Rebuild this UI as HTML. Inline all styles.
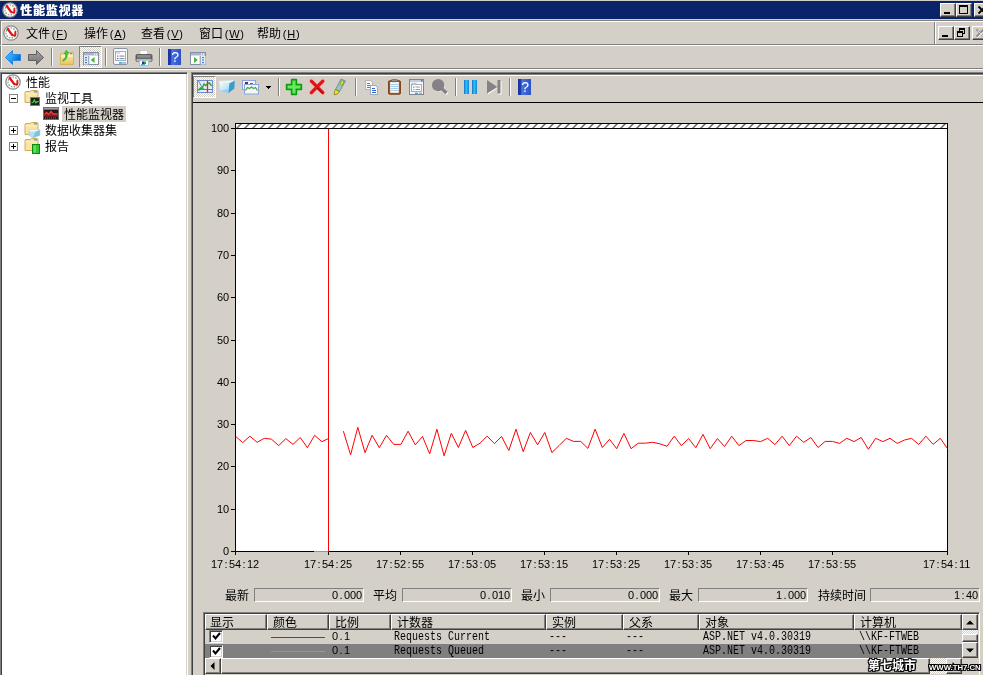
<!DOCTYPE html>
<html lang="zh-CN">
<head>
<meta charset="utf-8">
<title>性能监视器</title>
<style>
*{box-sizing:border-box;margin:0;padding:0}
html,body{width:983px;height:675px;overflow:hidden;background:#d4d0c8}
body{position:relative;font-family:"Liberation Sans","Noto Sans CJK SC",sans-serif;font-size:12px;color:#000;line-height:1}
#root{position:absolute;left:0;top:0;width:983px;height:675px;will-change:transform}
.a{position:absolute}
.t{position:absolute;white-space:nowrap;line-height:14px;height:14px;font-size:12px}
.t{margin-top:1px}
.ax{position:absolute;white-space:nowrap;line-height:14px;height:14px;font-family:"Liberation Mono",monospace;font-size:12px;transform:scaleX(.8333);transform-origin:0 50%;margin-top:2px}
.ax.r{transform-origin:100% 50%;text-align:right}
.nm{position:absolute;white-space:nowrap;line-height:14px;height:14px;font-family:"Liberation Sans",sans-serif;font-size:11px;letter-spacing:-0.12px;margin-top:0px}
.nm.r{text-align:right}
.nm i{display:inline-block;width:6px;text-align:center;font-style:normal;letter-spacing:0}
.btn{position:absolute;background:#d4d0c8;border:1px solid;border-color:#fff #404040 #404040 #fff;box-shadow:inset -1px -1px 0 #808080}
.sunk{position:absolute;border:1px solid;border-color:#808080 #fff #fff #808080}
.pressed{position:absolute;border:1px solid;border-color:#808080 #fff #fff #808080;background-color:#fff;background-image:linear-gradient(45deg,#d4d0c8 25%,transparent 25%,transparent 75%,#d4d0c8 75%),linear-gradient(45deg,#d4d0c8 25%,transparent 25%,transparent 75%,#d4d0c8 75%);background-size:2px 2px;background-position:0 0,1px 1px}
.dither{background-color:#fff;background-image:linear-gradient(45deg,#d4d0c8 25%,transparent 25%,transparent 75%,#d4d0c8 75%),linear-gradient(45deg,#d4d0c8 25%,transparent 25%,transparent 75%,#d4d0c8 75%);background-size:2px 2px;background-position:0 0,1px 1px}
.sep{position:absolute;width:2px;border-left:1px solid #808080;border-right:1px solid #fff}
.hd{position:absolute;top:614px;height:16px;background:#d4d0c8;border:1px solid;border-color:#fff #404040 #404040 #fff;box-shadow:inset -1px -1px 0 #808080}
.hd span{position:absolute;left:5px;top:1px;line-height:14px;white-space:nowrap}
.wm{position:absolute;white-space:nowrap;color:#fff;font-weight:bold;text-shadow:-1px -1px 0 #000,1px -1px 0 #000,-1px 1px 0 #000,1px 1px 0 #000,0 -1px 0 #000,0 1px 0 #000,-1px 0 0 #000,1px 0 0 #000}
u{text-decoration:underline}
</style>
</head>
<body>
<div id="root">
<div class="a" style="left:0;top:1px;width:983px;height:18px;background:#0a246a"></div>
<div class="t" style="left:20px;top:3px;color:#fff;font-weight:bold;letter-spacing:0.8px;text-shadow:.4px 0 0 #fff">性能监视器</div>
<div class="btn" style="left:940px;top:3px;width:16px;height:14px"><div class="a" style="left:3px;top:8px;width:6px;height:2px;background:#000"></div></div>
<div class="btn" style="left:956px;top:3px;width:16px;height:14px"><div class="a" style="left:2px;top:1px;width:9px;height:9px;border:1px solid #000;border-top-width:2px"></div></div>
<div class="btn" style="left:974px;top:3px;width:16px;height:14px"><svg class="a" style="left:2px;top:1px" width="10" height="10"><path d="M1.5 1.5 L8.5 8.5 M8.5 1.5 L1.5 8.5" stroke="#000" stroke-width="1.8"/></svg></div>
<div class="a" style="left:0;top:20px;width:990px;height:25px;border-left:1px solid #808080;border-top:1px solid #808080"></div>
<div class="a" style="left:1px;top:21px;width:990px;height:24px;border-left:1px solid #fff;border-top:1px solid #fff"></div>
<div class="a" style="left:2px;top:44px;width:990px;height:1px;background:#808080"></div>
<div class="a" style="left:1px;top:45px;width:990px;height:1px;background:#fff"></div>
<div class="a" style="left:2px;top:68px;width:990px;height:1px;background:#808080"></div>
<div class="a" style="left:0px;top:69px;width:990px;height:1px;background:#fff"></div>
<div class="a" style="left:0;top:46px;width:1px;height:23px;background:#808080"></div>
<div class="a" style="left:1px;top:46px;width:1px;height:22px;background:#fff"></div>
<div class="sep" style="left:934px;top:22px;height:22px"></div>
<div class="btn" style="left:938px;top:26px;width:16px;height:14px"><div class="a" style="left:3px;top:8px;width:6px;height:2px;background:#000"></div></div>
<div class="btn" style="left:954px;top:26px;width:16px;height:14px"><div class="a" style="left:4px;top:1px;width:6px;height:6px;border:1px solid #000;border-top-width:2px"></div><div class="a" style="left:2px;top:4px;width:6px;height:6px;border:1px solid #000;border-top-width:2px;background:#d4d0c8"></div></div>
<div class="btn" style="left:972px;top:26px;width:16px;height:14px"><svg class="a" style="left:2px;top:1px" width="10" height="10"><path d="M1.5 1.5 L8.5 8.5 M8.5 1.5 L1.5 8.5" stroke="#808080" stroke-width="1.6"/><path d="M2.5 2.5 L9.5 9.5 M9.5 2.5 L2.5 9.5" stroke="#fff" stroke-width="1" opacity=".8"/></svg></div>
<svg class="a" style="left:2px;top:2px" width="16" height="16" viewBox="0 0 16 16"><circle cx="8" cy="8" r="7.2" fill="#fff" stroke="#8a8a90" stroke-width="1.3"/><circle cx="8" cy="8" r="5" fill="none" stroke="#6f9a80" stroke-width="1.2" stroke-dasharray="1.6 1.2"/><path d="M4.2 3.3 L9.6 10.6" stroke="#e81010" stroke-width="2.3"/><path d="M9 10.4 L12.3 10.4 L12.3 6.2" stroke="#e81010" stroke-width="1.8" fill="none"/></svg>
<svg class="a" style="left:3px;top:25px" width="16" height="16" viewBox="0 0 16 16"><circle cx="8" cy="8" r="7.2" fill="#fff" stroke="#8a8a90" stroke-width="1.3"/><circle cx="8" cy="8" r="5" fill="none" stroke="#6f9a80" stroke-width="1.2" stroke-dasharray="1.6 1.2"/><path d="M4.2 3.3 L9.6 10.6" stroke="#e81010" stroke-width="2.3"/><path d="M9 10.4 L12.3 10.4 L12.3 6.2" stroke="#e81010" stroke-width="1.8" fill="none"/></svg>
<div class="t" style="left:26px;top:26px">文件</div>
<div class="nm" style="left:51.7px;top:27px;letter-spacing:.8px">(<u>F</u>)</div>
<div class="t" style="left:84px;top:26px">操作</div>
<div class="nm" style="left:109.7px;top:27px;letter-spacing:.8px">(<u>A</u>)</div>
<div class="t" style="left:141px;top:26px">查看</div>
<div class="nm" style="left:166.7px;top:27px;letter-spacing:.8px">(<u>V</u>)</div>
<div class="t" style="left:199px;top:26px">窗口</div>
<div class="nm" style="left:224.7px;top:27px;letter-spacing:.8px">(<u>W</u>)</div>
<div class="t" style="left:257px;top:26px">帮助</div>
<div class="nm" style="left:282.7px;top:27px;letter-spacing:.8px">(<u>H</u>)</div>
<svg class="a" style="left:4px;top:49px" width="18" height="17" viewBox="0 0 18 17"><defs><linearGradient id="gb" x1="0" y1="0" x2="1" y2=".5"><stop offset="0" stop-color="#48c0ff"/><stop offset=".55" stop-color="#20a0f8"/><stop offset="1" stop-color="#0864cc"/></linearGradient><linearGradient id="gg" x1="0" y1="0" x2="0" y2="1"><stop offset="0" stop-color="#a8a8a8"/><stop offset="1" stop-color="#707070"/></linearGradient></defs><path d="M1.5 8.5 L8.5 1.5 L8.5 5.5 L16.5 5.5 L16.5 11.5 L8.5 11.5 L8.5 15.5 Z" fill="url(#gb)" stroke="#2888e0" stroke-width="1"/></svg>
<svg class="a" style="left:27px;top:49px" width="18" height="17" viewBox="0 0 18 17"><path d="M16.5 8.5 L9.5 1.5 L9.5 5.5 L1.5 5.5 L1.5 11.5 L9.5 11.5 L9.5 15.5 Z" fill="url(#gg)" stroke="#606060" stroke-width="1"/></svg>
<div class="sep" style="left:51px;top:48px;height:18px"></div>
<svg class="a" style="left:59px;top:49px" width="16" height="17" viewBox="0 0 16 17"><defs><linearGradient id="gf" x1="0" y1="0" x2="0" y2="1"><stop offset="0" stop-color="#fcf0c0"/><stop offset="1" stop-color="#ecc458"/></linearGradient></defs><path d="M1.5 4.8 L9 4.8 L10 3.2 L14.5 3.2 L14.5 15.5 L1.5 15.5 Z" fill="url(#gf)" stroke="#d8b050" stroke-width=".9"/><path d="M2 7.2 H14" stroke="#fff8dc" stroke-width="1"/><rect x="10.8" y="3.8" width="2.6" height="1.3" fill="#4c8ce4"/><path d="M3.6 11.2 C6.2 10.2 7 7.5 6.6 4.6 L5 5 L7.2 1.2 L10 4 L8.4 4.3 C8.8 8 7 11.4 4 12.2 Z" fill="#44c834" stroke="#2ca020" stroke-width=".5"/></svg>
<div class="pressed" style="left:79px;top:46px;width:23px;height:22px"></div>
<svg class="a" style="left:83px;top:52px" width="16" height="13" viewBox="0 0 16 13"><rect x="0.5" y="0.5" width="15" height="12" fill="#fff" stroke="#8090a8"/><rect x="1" y="1" width="14" height="2.5" fill="#a8b4cc"/><rect x="11" y="1.5" width="1.2" height="1.2" fill="#fff"/><rect x="13" y="1.5" width="1.2" height="1.2" fill="#fff"/><rect x="1" y="4" width="4.5" height="8.5" fill="#e8ecf4"/><path d="M5.8 4 V12.5" stroke="#8090a8" stroke-width="1"/><rect x="2" y="5" width="2" height="1.2" fill="#4a7ad0"/><rect x="2" y="7.5" width="2" height="1.2" fill="#4a7ad0"/><rect x="2" y="10" width="2" height="1.2" fill="#4a7ad0"/><path d="M11.5 5 L11.5 11 L7.8 8 Z" fill="#3cb830"/></svg>
<div class="sep" style="left:105px;top:48px;height:18px"></div>
<svg class="a" style="left:113px;top:48px" width="16" height="17" viewBox="0 0 16 17"><rect x="0.5" y="0.5" width="14" height="16" rx="1.5" fill="#f4f6fa" stroke="#8a94a4"/><rect x="2.5" y="3.5" width="10" height="9" fill="#fff" stroke="#a8b0c0"/><rect x="3" y="4" width="4" height="2" fill="#d8dce8"/><rect x="4" y="7.5" width="1.4" height="1.2" fill="#3a80e0"/><rect x="6.5" y="7.5" width="5" height="1.2" fill="#9098a8"/><rect x="4" y="10" width="1.4" height="1.2" fill="#3a80e0"/><rect x="6.5" y="10" width="5" height="1.2" fill="#9098a8"/><rect x="6" y="14" width="3.5" height="1.8" fill="#30b8f0"/><rect x="10" y="14" width="3" height="1.8" fill="#b0b8c4"/></svg>
<svg class="a" style="left:135px;top:50px" width="18" height="16" viewBox="0 0 18 16"><rect x="5" y="0.5" width="7.5" height="5" fill="#fff" stroke="#c0c4cc" stroke-width=".8"/><rect x="1" y="4.5" width="16" height="7" rx="1.2" fill="#6c6c6c" stroke="#484848" stroke-width=".8"/><rect x="2.5" y="5" width="13" height="2.5" fill="#8c8c8c"/><rect x="1.5" y="9" width="15" height="2.5" fill="#b8b8b8"/><rect x="4.5" y="10.5" width="9" height="5" fill="#fff" stroke="#a8b8d0" stroke-width=".8"/><rect x="7" y="11.5" width="2" height="2.5" fill="#1a3a9a"/><rect x="9" y="11.5" width="2" height="2.5" fill="#28a028"/><rect x="6" y="14" width="4" height="1.2" fill="#30b0f0"/></svg>
<div class="sep" style="left:159px;top:48px;height:18px"></div>
<svg class="a" style="left:168px;top:49px" width="13" height="16" viewBox="0 0 13 16"><defs><linearGradient id="gh168" x1="0" y1="0" x2="1" y2="0"><stop offset="0" stop-color="#1c3cb0"/><stop offset=".35" stop-color="#4870e0"/><stop offset="1" stop-color="#2a50c8"/></linearGradient></defs><rect x="0" y="0" width="13" height="16" fill="url(#gh168)"/><rect x="0" y="0" width="3" height="16" fill="#182ea0" opacity=".7"/><text x="7.2" y="13" font-family="Liberation Sans,sans-serif" font-size="14" fill="#fff" text-anchor="middle">?</text></svg>
<svg class="a" style="left:190px;top:52px" width="16" height="13" viewBox="0 0 16 13"><rect x="0.5" y="0.5" width="15" height="12" fill="#fff" stroke="#8090a8"/><rect x="1" y="1" width="14" height="2.5" fill="#a8b4cc"/><rect x="11" y="1.5" width="1.2" height="1.2" fill="#fff"/><rect x="13" y="1.5" width="1.2" height="1.2" fill="#fff"/><rect x="10.5" y="4" width="5" height="8.5" fill="#e8ecf4"/><path d="M10.2 4 V12.5" stroke="#8090a8" stroke-width="1"/><rect x="12" y="5" width="2" height="1.2" fill="#4a7ad0"/><rect x="12" y="7.5" width="2" height="1.2" fill="#4a7ad0"/><rect x="12" y="10" width="2" height="1.2" fill="#4a7ad0"/><path d="M4 5 L4 11 L7.8 8 Z" fill="#3cb830"/></svg>
<div class="a" style="left:0;top:72px;width:188px;height:620px;background:#fff;border:1px solid;border-color:#808080 #fff #fff #808080;box-shadow:inset 1px 1px 0 #404040,inset -1px -1px 0 #d4d0c8"></div>
<svg class="a" style="left:5px;top:74px" width="16" height="16" viewBox="0 0 16 16"><circle cx="8" cy="8" r="7.2" fill="#fff" stroke="#8a8a90" stroke-width="1.3"/><circle cx="8" cy="8" r="5" fill="none" stroke="#6f9a80" stroke-width="1.2" stroke-dasharray="1.6 1.2"/><path d="M4.2 3.3 L9.6 10.6" stroke="#e81010" stroke-width="2.3"/><path d="M9 10.4 L12.3 10.4 L12.3 6.2" stroke="#e81010" stroke-width="1.8" fill="none"/></svg>
<div class="t" style="left:26px;top:75px">性能</div>
<svg class="a" style="left:9px;top:94px" width="9" height="9"><rect x=".5" y=".5" width="8" height="8" fill="#fff" stroke="#808080"/><path d="M2 4.5 H7" stroke="#000"/></svg>
<svg class="a" style="left:24px;top:90px" width="17" height="16" viewBox="0 0 17 16"><path d="M1 2.5 Q1 1.5 2 1.5 L6 1.5 L7.5 0.5 L13 0.5 Q14 0.5 14 1.5 L14 12.5 L1 12.5 Z" fill="#f8e4a4" stroke="#d0a448" stroke-width=".9"/><rect x="10" y="1.2" width="3" height="1.3" fill="#5a94e4"/><path d="M1.5 4 H13.5" stroke="#fff0c0" stroke-width="1"/><rect x="6.5" y="7.5" width="9" height="8" fill="#1c241c" stroke="#788078" stroke-width="1"/><path d="M7.5 12.8 L9 12.5 L10.3 10 L11.8 12.8 L13 11.6 L14.5 11.6" stroke="#40e040" stroke-width="1.1" fill="none"/></svg>
<div class="t" style="left:45px;top:91px">监视工具</div>
<svg class="a" style="left:43px;top:107px" width="16" height="13" viewBox="0 0 16 13"><rect x=".5" y=".5" width="15" height="12" fill="#281818" stroke="#707070"/><rect x="1" y="1" width="14" height="1.6" fill="#a0a0a8"/><path d="M1.5 7.5 L3.5 5.5 L5.5 7.5 L8 4.5 L10 7 L14.5 7" stroke="#ff4040" stroke-width="1.3" fill="none"/><path d="M1 7.8 L3.5 6 L5.5 8 L8 5 L10 7.4 L15 7.4 L15 9.5 L1 9.5 Z" fill="#c02020" opacity=".7"/><path d="M2 11 H14" stroke="#787878" stroke-width="1" stroke-dasharray="1 1"/></svg>
<div class="a" style="left:62px;top:106px;width:64px;height:16px;background:#d4d0c8"></div>
<div class="t" style="left:64px;top:107px">性能监视器</div>
<svg class="a" style="left:9px;top:126px" width="9" height="9"><rect x=".5" y=".5" width="8" height="8" fill="#fff" stroke="#808080"/><path d="M2 4.5 H7" stroke="#000"/><path d="M4.5 2 V7" stroke="#000"/></svg>
<svg class="a" style="left:24px;top:122px" width="17" height="16" viewBox="0 0 17 16"><path d="M1 2.5 Q1 1.5 2 1.5 L6 1.5 L7.5 0.5 L13 0.5 Q14 0.5 14 1.5 L14 12.5 L1 12.5 Z" fill="#f8e4a4" stroke="#d0a448" stroke-width=".9"/><rect x="10" y="1.2" width="3" height="1.3" fill="#5a94e4"/><path d="M1.5 4 H13.5" stroke="#fff0c0" stroke-width="1"/><path d="M5 8 L15.5 7.4 L16 8.5 L15.5 13.5 L9 15.8 L5 13.5 Z" fill="#b4e0f4" stroke="#88c4e0" stroke-width=".5"/><path d="M11.5 9.5 L16 8.5 L15.5 13.5 L9 15.8 Z" fill="#6cb8dc" opacity=".75"/><path d="M5 8 L15.5 7.4 L11.5 9.5 L6 9.6 Z" fill="#f0faff"/></svg>
<div class="t" style="left:45px;top:123px">数据收集器集</div>
<svg class="a" style="left:9px;top:142px" width="9" height="9"><rect x=".5" y=".5" width="8" height="8" fill="#fff" stroke="#808080"/><path d="M2 4.5 H7" stroke="#000"/><path d="M4.5 2 V7" stroke="#000"/></svg>
<svg class="a" style="left:24px;top:138px" width="17" height="16" viewBox="0 0 17 16"><path d="M1 2.5 Q1 1.5 2 1.5 L6 1.5 L7.5 0.5 L13 0.5 Q14 0.5 14 1.5 L14 12.5 L1 12.5 Z" fill="#f8e4a4" stroke="#d0a448" stroke-width=".9"/><rect x="10" y="1.2" width="3" height="1.3" fill="#5a94e4"/><path d="M1.5 4 H13.5" stroke="#fff0c0" stroke-width="1"/><rect x="8.5" y="6.5" width="7" height="9" fill="#30c830" stroke="#108810" stroke-width="1"/><rect x="9.5" y="7.5" width="2.5" height="7" fill="#78e878" opacity=".7"/></svg>
<div class="t" style="left:45px;top:139px">报告</div>
<div class="a" style="left:191px;top:72px;width:800px;height:620px;border-left:1px solid #808080;border-top:1px solid #808080"></div>
<div class="a" style="left:192px;top:73px;width:800px;height:620px;border-left:1px solid #404040;border-top:1px solid #404040"></div>
<div class="a" style="left:193px;top:74px;width:800px;height:1px;background:#808080"></div>
<div class="a" style="left:193px;top:75px;width:800px;height:1px;background:#fff"></div>
<div class="a" style="left:193px;top:102px;width:800px;height:1px;background:#000"></div>
<div class="pressed" style="left:193px;top:76px;width:23px;height:22px"></div>
<svg class="a" style="left:197px;top:80px" width="16" height="13" viewBox="0 0 16 13"><rect x=".5" y=".5" width="15" height="12" fill="#e4ecfa" stroke="#6f8cd0" stroke-width="1"/><path d="M1 9.5 H15" stroke="#5878c8" stroke-width="1"/><path d="M1.5 1 C4 5 5 9 8 9.5" stroke="#5878c8" stroke-width="1" fill="none"/><path d="M1.5 10.5 L3.5 8 L5 8.5 L7 4 L8.5 5.5 L11 3.5 L12.5 3 L14.5 6" stroke="#2cae2c" stroke-width="1.5" fill="none"/><path d="M10.5 0.5 V12.5" stroke="#e82810" stroke-width="1.3"/></svg>
<svg class="a" style="left:219px;top:80px" width="17" height="14" viewBox="0 0 17 14"><defs><linearGradient id="gc" x1="0" y1="0" x2="1" y2="1"><stop offset="0" stop-color="#ffffff"/><stop offset=".6" stop-color="#b8e0f4"/><stop offset="1" stop-color="#78c0e4"/></linearGradient></defs><path d="M0.3 1 L15.8 0.5 L15.3 8.5 L9.3 13.3 L0.8 10.5 Z" fill="url(#gc)"/><path d="M15.8 0.5 L15.3 8.5 L9.3 13.3 L10.5 3 Z" fill="#3a9ccc"/><path d="M0.3 1 L15.8 0.5 L10.5 3 L2 2.6 Z" fill="#e8f6fc"/><path d="M0.8 10.5 L9.3 13.3 L10 9 Z" fill="#8cccea" opacity=".7"/></svg>
<svg class="a" style="left:242px;top:80px" width="17" height="15" viewBox="0 0 17 15"><rect x=".5" y=".5" width="13" height="9" fill="#f0f4fc" stroke="#8ca4dc"/><rect x="3" y="2" width="3" height="2" fill="#a01038"/><rect x="8" y="3" width="3" height="1.2" fill="#3868e0"/><rect x="2.5" y="4.5" width="14" height="9.5" fill="#f4f6fc" stroke="#8ca4dc"/><path d="M3.5 10.5 L5.5 7.5 L7.5 8.5 L9.5 7 L11.5 8.5 L13.5 7.5 L15.5 10.5" stroke="#44aa3c" stroke-width="1.3" fill="none"/></svg>
<svg class="a" style="left:266px;top:86px" width="5" height="3" shape-rendering="crispEdges"><path d="M0 0 H5 V1 H0 Z M1 1 H4 V2 H1 Z M2 2 H3 V3 H2 Z" fill="#000"/></svg>
<div class="sep" style="left:278px;top:78px;height:18px"></div>
<svg class="a" style="left:285px;top:78px" width="18" height="18" viewBox="0 0 18 18"><path d="M6.5 1.5 H11.5 V6.5 H16.5 V11.5 H11.5 V16.5 H6.5 V11.5 H1.5 V6.5 H6.5 Z" fill="#34d02c" stroke="#0c9a10" stroke-width="1.4" stroke-linejoin="round"/><path d="M7.8 3 H10.2 V7.8 H15 V10.2 H10.2 V15 H7.8 V10.2 H3 V7.8 H7.8 Z" fill="#7cf070" opacity=".75"/></svg>
<svg class="a" style="left:308px;top:78px" width="18" height="18" viewBox="0 0 18 18"><path d="M3.2 3 L14.8 14.6 M14.8 3 L3.2 14.6" stroke="#f8b0a8" stroke-width="4.6" stroke-linecap="round"/><path d="M3.4 3.2 L14.8 14.6 M14.8 3.2 L3.4 14.6" stroke="#e01418" stroke-width="3.2" stroke-linecap="round"/><path d="M9.5 10.5 L14.5 15" stroke="#a00808" stroke-width="1.6" stroke-linecap="round" opacity=".7"/></svg>
<svg class="a" style="left:333px;top:78px" width="14" height="18" viewBox="0 0 14 18"><path d="M8 1 L12.5 3 L6.5 13.5 L2.5 11.5 Z" fill="#94c4cc" stroke="#5c8890" stroke-width=".8"/><path d="M8.6 2.5 L11 3.6 L8.8 7.5 L7 6.5 Z" fill="#ece41c" stroke="#8c8410" stroke-width=".6"/><path d="M2.5 11.5 L6.5 13.5 L4.5 16 L1.2 16.8 L1.5 13.5 Z" fill="#ece41c" stroke="#807810" stroke-width=".8"/></svg>
<div class="sep" style="left:355px;top:78px;height:18px"></div>
<svg class="a" style="left:365px;top:80px" width="14" height="15" viewBox="0 0 14 15" shape-rendering="crispEdges"><path d="M.5 .5 H5.5 L7.5 2.5 V9.5 H.5 Z" fill="#fbfbfd" stroke="#b4b4bc"/><path d="M2 3.5 H5 M2 5.5 H6 M2 7.5 H6" stroke="#3c7cdc" stroke-width="1"/><path d="M5.5 5.5 H10.5 L12.5 7.5 V14.5 H5.5 Z" fill="#fbfbfd" stroke="#a8a8b4"/><path d="M7 8.5 H10 M7 10.5 H11 M7 12.5 H11" stroke="#2c6cd4" stroke-width="1"/></svg>
<svg class="a" style="left:388px;top:79px" width="13" height="16" viewBox="0 0 13 16"><rect x=".6" y="1.8" width="11.8" height="13.4" rx=".8" fill="#a05c24" stroke="#7c3c10" stroke-width="1"/><rect x="2.2" y="3" width="8.6" height="10.8" fill="#fcfcff"/><rect x="3.5" y=".4" width="6" height="2.4" rx=".8" fill="#909090" stroke="#585858" stroke-width=".6"/><path d="M2.5 5.5 H10.5 M2.5 7.5 H10.5 M2.5 9.5 H10.5 M2.5 11.5 H10.5" stroke="#a4cce8" stroke-width="1"/></svg>
<svg class="a" style="left:409px;top:79px" width="15" height="16" viewBox="0 0 15 16"><rect x=".5" y=".5" width="14" height="15" fill="#f4f6fa" stroke="#7c8490"/><rect x="1" y="1" width="13" height="2" fill="#c4ccdc"/><rect x="12" y="1" width="1.5" height="1.5" fill="#4468d0"/><rect x="2.5" y="5.5" width="10" height="7" fill="#fff" stroke="#9ca4b4" stroke-width=".9"/><rect x="3" y="4.2" width="4" height="1.6" fill="#e4e8f0" stroke="#9ca4b4" stroke-width=".6"/><rect x="4" y="7.5" width="1.4" height="1.2" fill="#20a8f0"/><path d="M6.5 8 H11 M6.5 10.5 H11" stroke="#9098a8" stroke-width="1"/><rect x="4" y="10" width="1.4" height="1.2" fill="#a0a8b8"/><rect x="6" y="13.6" width="3" height="1.6" fill="#28b4f0"/><rect x="10" y="13.6" width="3" height="1.6" fill="#a8b0bc"/></svg>
<svg class="a" style="left:431px;top:78px" width="18" height="18" viewBox="0 0 18 18"><circle cx="8" cy="8" r="6" fill="#fff" opacity=".8"/><path d="M12 12 L16.5 16" stroke="#fff" stroke-width="3"/><circle cx="7.2" cy="7.2" r="6.2" fill="#848284"/><path d="M10.5 10.5 L15.6 15" stroke="#848284" stroke-width="3.2"/></svg>
<div class="sep" style="left:455px;top:78px;height:18px"></div>
<svg class="a" style="left:463px;top:79px" width="15" height="16" viewBox="0 0 15 16"><defs><linearGradient id="gp" x1="0" y1="0" x2="1" y2="0"><stop offset="0" stop-color="#1474c8"/><stop offset=".45" stop-color="#30c0fc"/><stop offset="1" stop-color="#1880d4"/></linearGradient></defs><rect x="1" y="1" width="5" height="14" fill="url(#gp)"/><rect x="9" y="1" width="5" height="14" fill="url(#gp)"/></svg>
<svg class="a" style="left:486px;top:79px" width="17" height="17" viewBox="0 0 17 17"><path d="M2 2 L12 8.5 L2 15.5 Z M12.5 2 H15.5 V15.5 H12.5 Z" fill="#fff"/><path d="M1 1 L11.5 8 L1 14.5 Z M11.5 1 H14.5 V14.5 H11.5 Z" fill="#848284"/></svg>
<div class="sep" style="left:509px;top:78px;height:18px"></div>
<svg class="a" style="left:518px;top:79px" width="13" height="16" viewBox="0 0 13 16"><defs><linearGradient id="gh518" x1="0" y1="0" x2="1" y2="0"><stop offset="0" stop-color="#1c3cb0"/><stop offset=".35" stop-color="#4870e0"/><stop offset="1" stop-color="#2a50c8"/></linearGradient></defs><rect x="0" y="0" width="13" height="16" fill="url(#gh518)"/><rect x="0" y="0" width="3" height="16" fill="#182ea0" opacity=".7"/><text x="7.2" y="13" font-family="Liberation Sans,sans-serif" font-size="14" fill="#fff" text-anchor="middle">?</text></svg>
<svg class="a" style="left:0;top:0" width="983" height="675" viewBox="0 0 983 675" shape-rendering="crispEdges">
<defs><pattern id="hatch" width="8" height="8" patternUnits="userSpaceOnUse" x="237.5" y="124"><path d="M-1 4.5 L4.5 -1 M3 8.5 L8.5 3" stroke="#383838" stroke-width="1.15" shape-rendering="auto"/></pattern></defs>
<rect x="235" y="123" width="713" height="429" fill="#fff"/>
<rect x="236" y="124" width="711" height="4" fill="url(#hatch)"/>
<path d="M235 123.5 H948 M235 128.5 H948 M235.5 123 V555 M947.5 123 V555 M231 551.5 H948" stroke="#000" stroke-width="1" fill="none"/>
<path d="M231 128.5 H235" stroke="#000" stroke-width="1"/>
<path d="M231 170.5 H235" stroke="#000" stroke-width="1"/>
<path d="M231 213.5 H235" stroke="#000" stroke-width="1"/>
<path d="M231 255.5 H235" stroke="#000" stroke-width="1"/>
<path d="M231 297.5 H235" stroke="#000" stroke-width="1"/>
<path d="M231 340.5 H235" stroke="#000" stroke-width="1"/>
<path d="M231 382.5 H235" stroke="#000" stroke-width="1"/>
<path d="M231 424.5 H235" stroke="#000" stroke-width="1"/>
<path d="M231 466.5 H235" stroke="#000" stroke-width="1"/>
<path d="M231 509.5 H235" stroke="#000" stroke-width="1"/>
<path d="M231 551.5 H235" stroke="#000" stroke-width="1"/>
<path d="M328.5 551 V555" stroke="#000" stroke-width="1"/>
<path d="M400.5 551 V555" stroke="#000" stroke-width="1"/>
<path d="M472.5 551 V555" stroke="#000" stroke-width="1"/>
<path d="M544.5 551 V555" stroke="#000" stroke-width="1"/>
<path d="M616.5 551 V555" stroke="#000" stroke-width="1"/>
<path d="M688.5 551 V555" stroke="#000" stroke-width="1"/>
<path d="M760.5 551 V555" stroke="#000" stroke-width="1"/>
<path d="M832.5 551 V555" stroke="#000" stroke-width="1"/>
<path d="M314 551.5 H328" stroke="#00ff00" stroke-width="1"/>
<path d="M328.5 129 V552" stroke="#ff0000" stroke-width="1"/>
<g shape-rendering="geometricPrecision"><polyline points="235.5,436.2 242.7,442.6 249.9,436.2 257.1,442.3 264.3,438.3 271.5,439.2 278.7,445.6 285.8,438.6 293.0,444.4 300.2,437.5 307.4,447.7 314.6,435.3 321.8,441.7 329.0,438.3" fill="none" stroke="#ff0000" stroke-width="1" stroke-linejoin="bevel"/><polyline points="343.4,431.2 350.6,454.8 357.8,427.3 365.0,452.7 372.1,435.3 379.3,447.7 386.5,435.3 393.7,444.4 400.9,444.4 408.1,431.2 415.3,444.8 422.5,436.5 429.7,453.8 436.9,429.2 444.1,455.8 451.3,433.3 458.4,447.5 465.6,430.4 472.8,447.5 480.0,443.2 487.2,436.2 494.4,443.6 501.6,436.5 508.8,450.5 516.0,429.2 523.2,451.7 530.4,432.5 537.6,444.8 544.8,432.5 551.9,452.6 559.1,445.5 566.3,438.3 573.5,441.4 580.7,441.4 587.9,448.4 595.1,429.2 602.3,447.5 609.5,439.3 616.7,448.7 623.9,433.4 631.1,448.7 638.2,443.2 645.4,443.2 652.6,442.3 659.8,443.8 667.0,446.3 674.2,436.2 681.4,445.6 688.6,438.6 695.8,447.7 703.0,434.4 710.2,448.7 717.4,438.6 724.6,446.5 731.7,436.2 738.9,445.6 746.1,440.5 753.3,440.5 760.5,441.6 767.7,438.3 774.9,444.6 782.1,436.2 789.3,445.6 796.5,436.2 803.7,442.3 810.9,437.5 818.0,447.5 825.2,441.4 832.4,441.4 839.6,443.4 846.8,438.3 854.0,441.6 861.2,437.5 868.4,449.3 875.6,438.3 882.8,441.6 890.0,438.3 897.2,443.4 904.3,440.1 911.5,438.3 918.7,444.4 925.9,436.2 933.1,444.4 940.3,438.3 947.5,448.7" fill="none" stroke="#ff0000" stroke-width="1" stroke-linejoin="bevel"/></g>
</svg>
<div class="nm r" style="left:180px;width:49px;top:121px">100</div>
<div class="nm r" style="left:180px;width:49px;top:163px">90</div>
<div class="nm r" style="left:180px;width:49px;top:206px">80</div>
<div class="nm r" style="left:180px;width:49px;top:248px">70</div>
<div class="nm r" style="left:180px;width:49px;top:290px">60</div>
<div class="nm r" style="left:180px;width:49px;top:333px">50</div>
<div class="nm r" style="left:180px;width:49px;top:375px">40</div>
<div class="nm r" style="left:180px;width:49px;top:417px">30</div>
<div class="nm r" style="left:180px;width:49px;top:459px">20</div>
<div class="nm r" style="left:180px;width:49px;top:502px">10</div>
<div class="nm r" style="left:180px;width:49px;top:544px">0</div>
<div class="nm" style="left:211px;top:557px">17<i>:</i>54<i>:</i>12</div>
<div class="nm" style="left:304px;top:557px">17<i>:</i>54<i>:</i>25</div>
<div class="nm" style="left:376px;top:557px">17<i>:</i>52<i>:</i>55</div>
<div class="nm" style="left:448px;top:557px">17<i>:</i>53<i>:</i>05</div>
<div class="nm" style="left:520px;top:557px">17<i>:</i>53<i>:</i>15</div>
<div class="nm" style="left:592px;top:557px">17<i>:</i>53<i>:</i>25</div>
<div class="nm" style="left:664px;top:557px">17<i>:</i>53<i>:</i>35</div>
<div class="nm" style="left:736px;top:557px">17<i>:</i>53<i>:</i>45</div>
<div class="nm" style="left:808px;top:557px">17<i>:</i>53<i>:</i>55</div>
<div class="nm" style="left:923px;top:557px">17<i>:</i>54<i>:</i>11</div>
<div class="t" style="left:225px;top:588px">最新</div>
<div class="sunk" style="left:254px;top:588px;width:110px;height:14px"></div>
<div class="nm r" style="left:254px;width:108px;top:588px">0<i>.</i>000</div>
<div class="t" style="left:373px;top:588px">平均</div>
<div class="sunk" style="left:402px;top:588px;width:110px;height:14px"></div>
<div class="nm r" style="left:402px;width:108px;top:588px">0<i>.</i>010</div>
<div class="t" style="left:521px;top:588px">最小</div>
<div class="sunk" style="left:550px;top:588px;width:110px;height:14px"></div>
<div class="nm r" style="left:550px;width:108px;top:588px">0<i>.</i>000</div>
<div class="t" style="left:669px;top:588px">最大</div>
<div class="sunk" style="left:698px;top:588px;width:110px;height:14px"></div>
<div class="nm r" style="left:698px;width:108px;top:588px">1<i>.</i>000</div>
<div class="t" style="left:818px;top:588px">持续时间</div>
<div class="sunk" style="left:870px;top:588px;width:110px;height:14px"></div>
<div class="nm r" style="left:870px;width:108px;top:588px">1<i>:</i>40</div>
<div class="a" style="left:203px;top:612px;width:777px;height:70px;border:1px solid;border-color:#808080 #fff #fff #808080;box-shadow:inset 1px 1px 0 #404040,inset -1px -1px 0 #d4d0c8"></div>
<div class="hd" style="left:205px;width:62px"><span style="left:4px">显示</span></div>
<div class="hd" style="left:267px;width:62px"><span style="left:5px">颜色</span></div>
<div class="hd" style="left:329px;width:62px"><span style="left:5px">比例</span></div>
<div class="hd" style="left:391px;width:155px"><span style="left:5px">计数器</span></div>
<div class="hd" style="left:546px;width:77px"><span style="left:5px">实例</span></div>
<div class="hd" style="left:623px;width:76px"><span style="left:5px">父系</span></div>
<div class="hd" style="left:699px;width:155px"><span style="left:5px">对象</span></div>
<div class="hd" style="left:854px;width:108px"><span style="left:5px">计算机</span></div>
<div class="a" style="left:205px;top:644px;width:757px;height:14px;background:#808080"></div>
<div class="a" style="left:209px;top:630px;width:14px;height:13px;background:#fff;border:1px solid;border-color:#808080 #fff #fff #808080;box-shadow:inset 1px 1px 0 #404040,inset -1px -1px 0 #d4d0c8"></div>
<svg class="a" style="left:212px;top:632px" width="9" height="9"><path d="M1 3.5 L3.5 6.5 L8 1" stroke="#000" stroke-width="2" fill="none"/></svg>
<div class="a" style="left:271px;top:637px;width:54px;height:1px;background:#ff0000"></div>
<div class="nm" style="left:332px;top:629px">0<i>.</i>1</div>
<div class="ax" style="left:394px;top:628px">Requests Current</div>
<div class="ax" style="left:549px;top:628px">---</div>
<div class="ax" style="left:626px;top:628px">---</div>
<div class="ax" style="left:703px;top:628px">ASP.NET v4.0.30319</div>
<div class="ax" style="left:859px;top:628px">\\KF-FTWEB</div>
<div class="a" style="left:209px;top:645px;width:14px;height:13px;background:#fff;border:1px solid;border-color:#808080 #fff #fff #808080;box-shadow:inset 1px 1px 0 #404040,inset -1px -1px 0 #d4d0c8"></div>
<svg class="a" style="left:212px;top:647px" width="9" height="9"><path d="M1 3.5 L3.5 6.5 L8 1" stroke="#000" stroke-width="2" fill="none"/></svg>
<div class="a" style="left:271px;top:651px;width:54px;height:1px;background:#00ff00"></div>
<div class="nm" style="left:332px;top:643px">0<i>.</i>1</div>
<div class="ax" style="left:394px;top:642px">Requests Queued</div>
<div class="ax" style="left:549px;top:642px">---</div>
<div class="ax" style="left:626px;top:642px">---</div>
<div class="ax" style="left:703px;top:642px">ASP.NET v4.0.30319</div>
<div class="ax" style="left:859px;top:642px">\\KF-FTWEB</div>
<div class="a dither" style="left:962px;top:630px;width:16px;height:28px"></div>
<div class="btn" style="left:962px;top:614px;width:16px;height:16px"><svg class="a" style="left:3px;top:5px" width="8" height="5"><path d="M0 4.5 L4 0.5 L8 4.5 Z" fill="#000"/></svg></div>
<div class="btn" style="left:962px;top:634px;width:16px;height:8px"></div>
<div class="btn" style="left:962px;top:642px;width:16px;height:16px"><svg class="a" style="left:3px;top:5px" width="8" height="5"><path d="M0 0.5 L8 0.5 L4 4.5 Z" fill="#000"/></svg></div>
<div class="a dither" style="left:205px;top:658px;width:757px;height:16px"></div>
<div class="btn" style="left:205px;top:658px;width:16px;height:16px"><svg class="a" style="left:4px;top:3px" width="5" height="8"><path d="M4.5 0 L0.5 4 L4.5 8 Z" fill="#000"/></svg></div>
<div class="btn" style="left:221px;top:658px;width:709px;height:16px"></div>
<div class="btn" style="left:946px;top:658px;width:16px;height:16px"><svg class="a" style="left:5px;top:3px" width="5" height="8"><path d="M0.5 0 L4.5 4 L0.5 8 Z" fill="#000"/></svg></div>
<div class="a" style="left:962px;top:658px;width:16px;height:16px;background:#d4d0c8"></div>
<div class="wm" style="left:868px;top:659px;font-size:12px;line-height:14px">第七城市</div>
<div class="wm" style="left:929px;top:664px;font-size:8px;line-height:10px;transform-origin:0 0;transform:scale(.97,.9)">WWW.TH7.CN</div>
</div>
</body>
</html>
